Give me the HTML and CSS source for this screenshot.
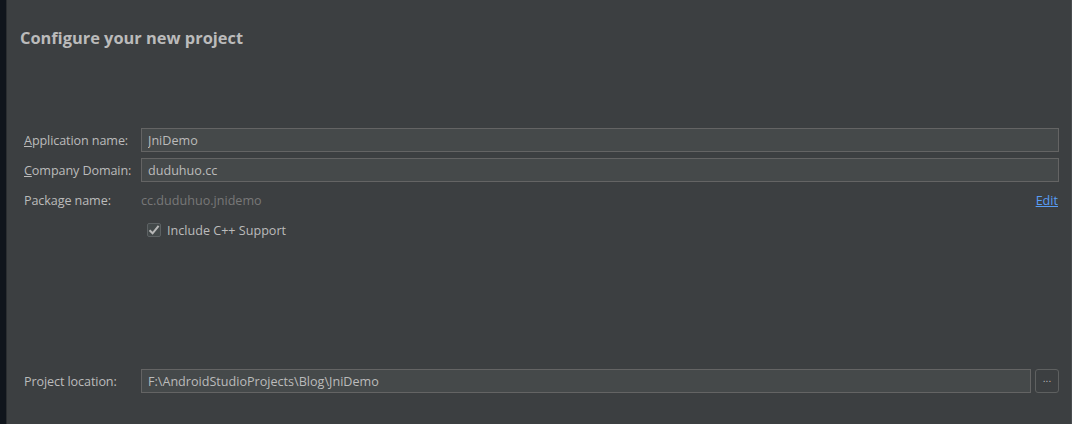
FILE: index.html
```html
<!DOCTYPE html>
<html lang="en">
<head>
    <meta charset="UTF-8">
    <meta name="viewport" content="width=device-width, initial-scale=1.0">
    <title>Create New Project</title>
    <link rel="stylesheet" href="styles.css">
</head>
<body>
    <div class="edge"></div>
    <div class="wizard">
        <h1 class="title">Configure your new project</h1>
        <div class="form">
            <div class="row">
                <label class="label" for="appName"><u>A</u>pplication name:</label>
                <input class="field" type="text" id="appName" value="JniDemo">
            </div>
            <div class="row">
                <label class="label" for="domain"><u>C</u>ompany Domain:</label>
                <input class="field" type="text" id="domain" value="duduhuo.cc">
            </div>
            <div class="row plain">
                <span class="label">Package name:</span>
                <span class="package">cc.duduhuo.jnidemo</span>
                <a class="edit" href="#">Edit</a>
            </div>
            <div class="row plain">
                <span class="label"></span>
                <label class="check">
                    <span class="box">
                        <svg width="12" height="12" viewBox="0 0 12 12">
                            <path d="M1.5 6.2 L4.6 9.3 L10.6 1.8" fill="none" stroke="#b8b8b8" stroke-width="2"/>
                        </svg>
                    </span>
                    Include C++ Support
                </label>
            </div>
        </div>
        <div class="spacer"></div>
        <div class="row location">
            <label class="label" for="location">Project location:</label>
            <input class="field" type="text" id="location" value="F:\AndroidStudioProjects\Blog\JniDemo">
            <button class="browse">...</button>
        </div>
    </div>
    <div class="edge-right"></div>
</body>
</html>
```

FILE: styles.css
```css
body {
    margin: 0;
    height: 424px;
    display: flex;
    background-color: #3c3f41;
    font-family: "Open Sans", "Noto Sans", sans-serif;
    font-size: 12.6px;
    color: #bbbbbb;
    overflow: hidden;
}
.edge {
    width: 6px;
    background-color: #10151c;
    border-right: 1px solid #2b2e31;
}
.edge-right {
    width: 1px;
    background-color: #4a4d50;
}
.wizard {
    flex: 1;
    display: flex;
    flex-direction: column;
    padding: 28px 12px 31px 13px;
}
.title {
    margin: 0;
    font-size: 16.4px;
    font-weight: bold;
    color: #bbbbbb;
    line-height: 20px;
}
.form {
    margin-top: 80px;
    padding-left: 4px;
}
.row {
    display: flex;
    align-items: center;
    height: 24px;
    margin-bottom: 6px;
}
.label {
    width: 117px;
    flex-shrink: 0;
    letter-spacing: -0.1px;
}
.label u {
    text-decoration-thickness: 1px;
}
.field {
    flex: 1;
    height: 24px;
    box-sizing: border-box;
    background-color: #45494a;
    border: 1px solid #646464;
    color: #bbbbbb;
    font-family: inherit;
    font-size: 12.6px;
    padding: 1px 6px 0;
    outline: none;
}
.package {
    flex: 1;
    color: #787878;
}
.edit {
    color: #589df6;
    text-decoration: underline;
    margin-right: 1px;
}
.check {
    display: flex;
    align-items: center;
    gap: 6px;
    margin-left: 6px;
}
.box {
    width: 14px;
    height: 14px;
    box-sizing: border-box;
    display: flex;
    align-items: center;
    justify-content: center;
    background-color: #43494a;
    border: 1px solid #5c6163;
    border-radius: 2px;
}
.spacer {
    flex: 1;
}
.location {
    padding-left: 4px;
    margin-bottom: 0;
}
.browse {
    width: 24px;
    height: 24px;
    margin-left: 4px;
    background-color: #3c3f41;
    border: 1px solid #5e6060;
    border-radius: 3px;
    color: #bbbbbb;
    font-size: 10px;
    line-height: 1;
    padding: 0 0 4px;
}
```
